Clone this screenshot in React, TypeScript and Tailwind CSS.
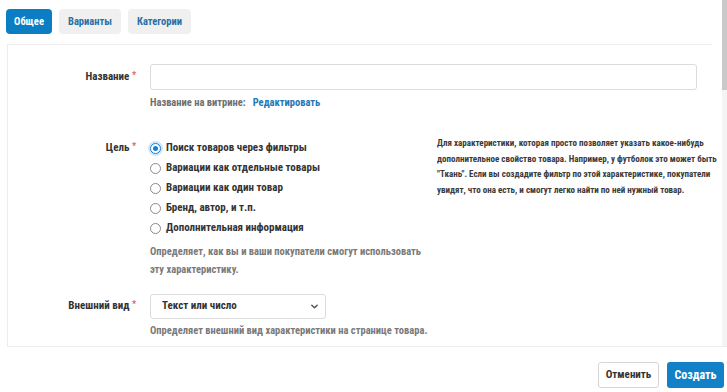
import React from "react";

const FONT = "font-['Roboto_Condensed','Roboto',sans-serif] font-stretch-condensed";

const GOALS = [
  "Поиск товаров через фильтры",
  "Вариации как отдельные товары",
  "Вариации как один товар",
  "Бренд, автор, и т.п.",
  "Дополнительная информация",
];

function Label({ text }: { text: string }) {
  return (
    <div className="text-right text-[11px] font-bold text-[#333]">
      {text} <span className="align-top text-[9px] text-[#e0606a]">*</span>
    </div>
  );
}

function Radio({ checked }: { checked?: boolean }) {
  return (
    <span
      className={`flex h-[11px] w-[11px] shrink-0 items-center justify-center rounded-full border ${
        checked ? "border-[#1a7fd0] bg-white ring-2 ring-[#d3e6f6]" : "border-[#8a8a8a] bg-white"
      }`}
    >
      {checked && <span className="h-[5px] w-[5px] rounded-full bg-[#1a7fd0]" />}
    </span>
  );
}

export default function App() {
  return (
    <div className={`flex h-[392px] w-[727px] flex-col overflow-hidden bg-white ${FONT}`}>
      <div className="flex min-h-0 flex-1">
        <div className="flex min-w-0 flex-1 flex-col">
          {/* tabs */}
          <div className="flex gap-[7px] px-[6px] pt-[9px] pb-[10px]">
            <button className="h-[25px] w-[46px] rounded-[4px] bg-[#0b7ec3] text-[10.5px] font-bold text-white">
              Общее
            </button>
            <button className="h-[25px] w-[62px] rounded-[4px] bg-[#f0f0f0] text-[10.5px] font-bold text-[#2a6fa6]">
              Варианты
            </button>
            <button className="h-[25px] w-[63px] rounded-[4px] bg-[#f0f0f0] text-[10.5px] font-bold text-[#2a6fa6]">
              Категории
            </button>
          </div>

          {/* panel */}
          <div className="ml-[7px] mr-[10px] flex-1 border-t border-l border-[#ececec] pt-[19px]">
            <div className="grid grid-cols-[128px_1fr] items-start gap-x-[14px]">
              <div className="flex h-[26px] items-center justify-end">
                <Label text="Название" />
              </div>
              <div className="pr-[5px]">
                <input className="block h-[26px] w-[547px] rounded-[3px] border border-[#dcdcdc] bg-white px-2 text-[11px] outline-none" />
                <div className="mt-[6px] flex h-[14px] items-center gap-[7px] text-[10.5px] font-bold">
                  <span className="text-[#6f6f6f]">Название на витрине:</span>
                  <span className="text-[#1f78b4]">Редактировать</span>
                </div>
              </div>

              <div className="mt-[28px] flex h-[20px] items-center justify-end">
                <Label text="Цель" />
              </div>
              <div className="mt-[28px] flex gap-[17px]">
                <div className="w-[270px]">
                  <div className="flex flex-col">
                    {GOALS.map((g, i) => (
                      <label key={g} className="flex h-[20px] items-center gap-[5px] text-[11px] font-bold text-[#333]">
                        <Radio checked={i === 0} />
                        {g}
                      </label>
                    ))}
                  </div>
                  <p className="mt-[5px] text-[10.5px] leading-[18px] font-bold whitespace-nowrap text-[#7a7a7a]">
                    Определяет, как вы и ваши покупатели смогут использовать
                    <br />
                    эту характеристику.
                  </p>
                </div>
                <p className="mt-[-2px] text-[9px] leading-[15.6px] font-bold whitespace-nowrap text-[#3a3a3a]">
                  Для характеристики, которая просто позволяет указать какое-нибудь
                  <br />
                  дополнительное свойство товара. Например, у футболок это может быть
                  <br />
                  "Ткань". Если вы создадите фильтр по этой характеристике, покупатели
                  <br />
                  увидят, что она есть, и смогут легко найти по ней нужный товар.
                </p>
              </div>

              <div className="mt-[15px] flex h-[25px] items-center justify-end">
                <Label text="Внешний вид" />
              </div>
              <div className="mt-[15px]">
                <div className="flex h-[25px] w-[176px] items-center justify-between rounded-[3px] border border-[#dcdcdc] bg-white pr-[6px] pl-[11px] text-[11px] font-bold text-[#333]">
                  <span>Текст или число</span>
                  <svg width="9" height="9" viewBox="0 0 10 10" fill="none">
                    <path d="M2 3.5 5 6.5 8 3.5" stroke="#555" strokeWidth="1.6" strokeLinecap="round" strokeLinejoin="round" />
                  </svg>
                </div>
                <div className="mt-[4px] text-[10.5px] leading-[16px] font-bold text-[#7a7a7a]">
                  Определяет внешний вид характеристики на странице товара.
                </div>
              </div>
            </div>
          </div>
        </div>

        {/* scrollbar */}
        <div className="flex w-[5px] flex-col bg-[#f4f4f4]">
          <div className="h-[90px] bg-[#c9c9c9]" />
        </div>
      </div>

      {/* footer */}
      <div className="ml-[7px] flex h-[46px] items-end justify-end gap-[8px] border-t border-[#ececec] pr-[3px] pb-[4px]">
        <button className="h-[26px] w-[61px] rounded-[3px] border border-[#d6d6d6] bg-white text-[11px] font-bold text-[#333]">
          Отменить
        </button>
        <button className="h-[26px] w-[57px] rounded-[3px] bg-[#1381c7] text-[12px] font-bold text-white">
          Создать
        </button>
      </div>
    </div>
  );
}
